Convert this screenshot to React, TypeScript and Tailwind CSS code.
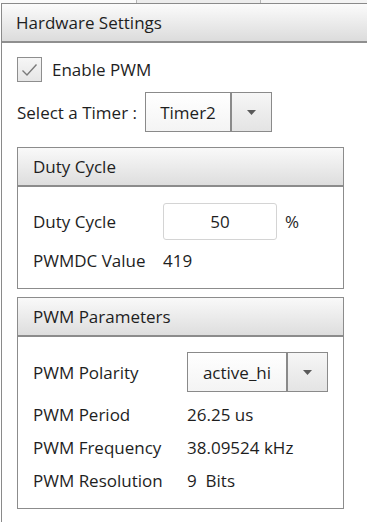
import React from "react";

const font = { fontFamily: '"Open Sans", "Noto Sans", sans-serif' };

function Arrow() {
  return (
    <svg width="9" height="5" viewBox="0 0 9 5">
      <path d="M0 0 H9 L4.5 5 Z" fill="#5a5a5a" />
    </svg>
  );
}

function Combo({ value, w, textW }: { value: string; w: string; textW: string }) {
  return (
    <div className={`flex h-[40px] ${w} border border-[#8a8a8a] bg-white`}>
      <div className={`flex items-center justify-center ${textW} bg-gradient-to-b from-[#ffffff] to-[#f4f4f4] text-[17px] text-[#1e1e1e]`}>
        {value}
      </div>
      <div className="flex flex-1 items-center justify-center border-l-2 border-[#8a8a8a] bg-gradient-to-b from-[#f6f6f6] to-[#e4e4e4]">
        <Arrow />
      </div>
    </div>
  );
}

function GroupHeader({ title }: { title: string }) {
  return (
    <div className="flex h-[39px] items-center border-b-2 border-[#8c8c8c] bg-gradient-to-b from-[#f9f9f9] to-[#dedede] pl-[15px] text-[17px] leading-none text-[#1e1e1e]">
      {title}
    </div>
  );
}

export default function App() {
  return (
    <div className="relative h-[522px] w-[367px] overflow-hidden bg-white text-[17px] leading-none text-[#1e1e1e]" style={font}>
      <div className="flex h-[3px]">
        <div className="w-[137px] border-r border-[#b5b5b5] bg-[#fafafa]" />
        <div className="w-[124px] border-r border-[#b5b5b5] bg-[#ececec]" />
        <div className="flex-1 bg-[#f3f3f3]" />
      </div>
      <div className="ml-[1px] flex h-[519px] flex-col border-l border-t border-[#8a8a8a]">
        <div className="flex h-[39px] items-center border-b-2 border-[#8f8f8f] bg-gradient-to-b from-[#fbfbfb] to-[#dcdcdc] pl-[14px]">
          Hardware Settings
        </div>
        <div className="flex flex-col pl-[15px] pt-[14px]">
          <div className="flex h-[25px] items-center gap-[10px]">
            <div className="flex h-[25px] w-[25px] items-center justify-center border border-[#8e8e8e] bg-gradient-to-b from-[#f6f6f6] to-[#e6e6e6]">
              <svg width="17" height="14" viewBox="0 0 17 14">
                <path d="M1.5 7.5 L6 12 L15.5 1.5" fill="none" stroke="#7a7a7a" strokeWidth="1.4" />
              </svg>
            </div>
            <span>Enable PWM</span>
          </div>
          <div className="mt-[10px] flex items-center">
            <span className="w-[128px]">Select a Timer :</span>
            <Combo value="Timer2" w="w-[127px]" textW="w-[84px]" />
          </div>

          <div className="mt-[15px] flex h-[142px] w-[327px] flex-col border border-[#8c8c8c]">
            <GroupHeader title="Duty Cycle" />
            <div className="flex flex-col pl-[15px] pt-[16px]">
              <div className="flex items-center">
                <span className="w-[130px]">Duty Cycle</span>
                <div className="flex h-[37px] w-[114px] items-center justify-center rounded-[3px] border border-[#d4d4d4]">
                  50
                </div>
                <span className="ml-[8px]">%</span>
              </div>
              <div className="mt-[5px] flex h-[30px] items-center">
                <span className="w-[130px]">PWMDC Value</span>
                <span>419</span>
              </div>
            </div>
          </div>

          <div className="mt-[8px] flex h-[212px] w-[327px] flex-col border border-[#8c8c8c]">
            <GroupHeader title="PWM Parameters" />
            <div className="flex flex-col pl-[15px] pt-[15px]">
              <div className="flex items-center">
                <span className="w-[154px]">PWM Polarity</span>
                <Combo value="active_hi" w="w-[141px]" textW="w-[98px]" />
              </div>
              <div className="mt-[6px] flex h-[33px] items-center">
                <span className="w-[154px]">PWM Period</span>
                <span>26.25 us</span>
              </div>
              <div className="flex h-[33px] items-center">
                <span className="w-[154px]">PWM Frequency</span>
                <span>38.09524 kHz</span>
              </div>
              <div className="flex h-[33px] items-center">
                <span className="w-[154px]">PWM Resolution</span>
                <span className="whitespace-pre">9  Bits</span>
              </div>
            </div>
          </div>
        </div>
      </div>
    </div>
  );
}
